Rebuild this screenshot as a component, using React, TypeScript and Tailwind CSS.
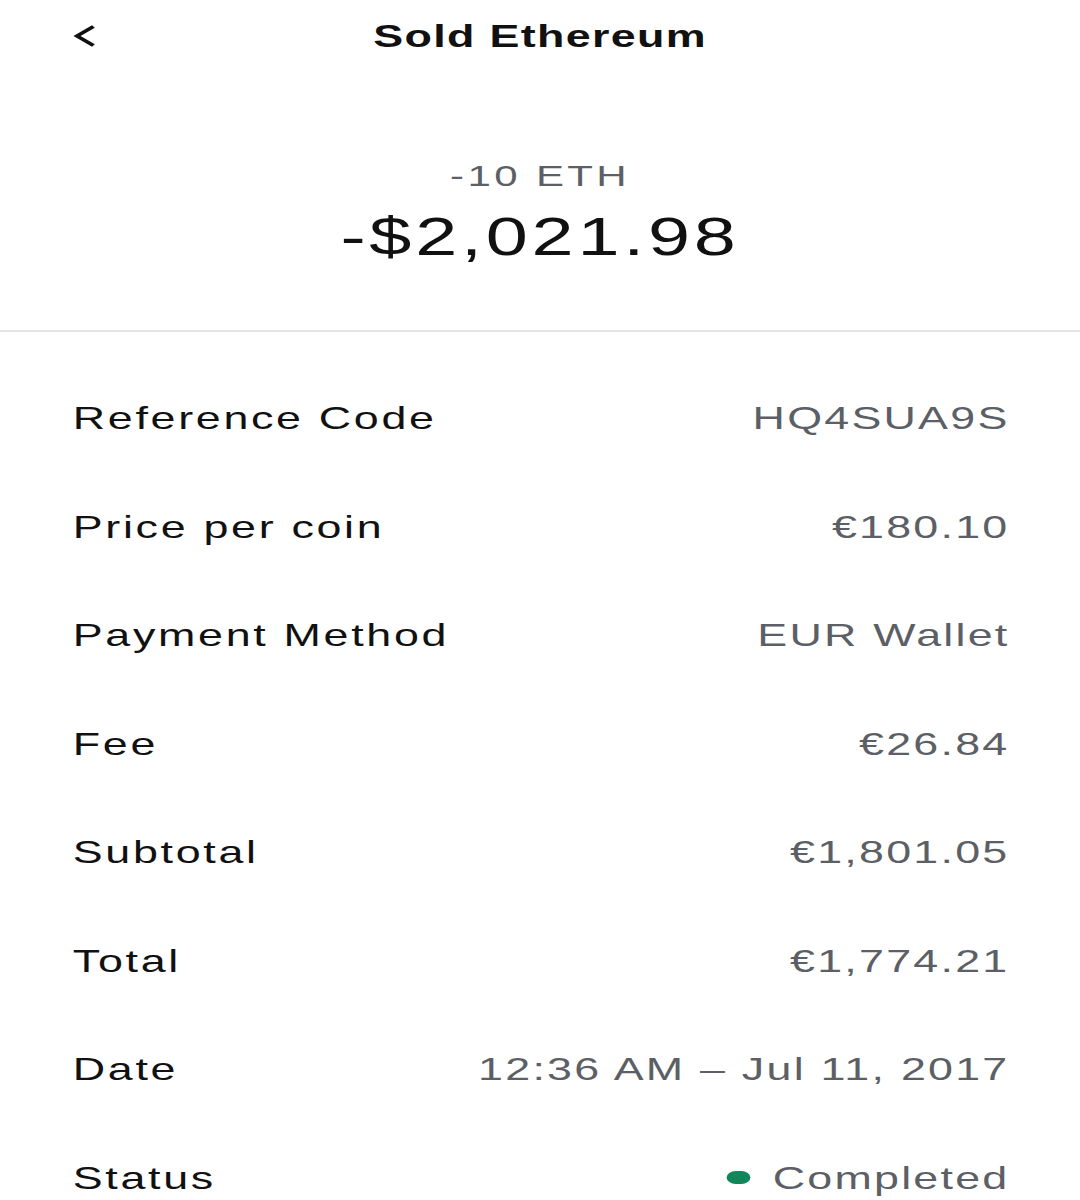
import React from 'react';

interface Row {
  label: string;
  value: string;
  status?: boolean;
}

const ROWS: Row[] = [
  { label: 'Reference Code', value: 'HQ4SUA9S' },
  { label: 'Price per coin', value: '€180.10' },
  { label: 'Payment Method', value: 'EUR Wallet' },
  { label: 'Fee', value: '€26.84' },
  { label: 'Subtotal', value: '€1,801.05' },
  { label: 'Total', value: '€1,774.21' },
  { label: 'Date', value: '12:36 AM – Jul 11, 2017' },
  { label: 'Status', value: 'Completed', status: true }
];

const App: React.FC = () => {
  return (
    <div className="w-[1080px] h-[1200px] overflow-hidden bg-white font-['Liberation_Sans',Arial,sans-serif]">
      {/* The screen is drawn wide: lay out at 771px, stretch horizontally */}
      <div className="w-[771.5px] origin-top-left scale-x-[1.4]">
        {/* Header */}
        <div className="h-[72px] px-[52px] flex items-center">
          <svg className="w-[16px] h-[22px] text-[#111]" viewBox="0 0 16 22" fill="none" stroke="currentColor" strokeWidth={3.2} strokeLinecap="square">
            <path d="M13.5 2.5L3 11l10.5 8.5" />
          </svg>
          <h1 className="flex-1 text-center text-[32px] leading-none font-bold tracking-[0.03em] text-[#111]">
            Sold Ethereum
          </h1>
          <div className="w-[16px]" />
        </div>

        {/* Amount */}
        <div className="flex flex-col items-center pt-[86px] pb-[64px]">
          <p className="text-[30px] leading-[36px] tracking-[0.08em] text-[#5c5f66]">-10 ETH</p>
          <p className="mt-[12px] text-[54px] leading-[60px] tracking-[0.05em] text-[#111]">-$2,021.98</p>
        </div>

        <div className="h-[2px] bg-[#e4e4e4]" />

        {/* Details */}
        <div className="pt-[32px] px-[52px]">
          {ROWS.map((row) =>
          <div key={row.label} className="h-[108.5px] flex items-center justify-between text-[32px] leading-none">
              <span className="tracking-[0.06em] text-[#111]">{row.label}</span>
              <span className="flex items-center tracking-[0.05em] -mr-[0.05em] text-[#5c5f66]">
                {row.status && <span className="w-[17px] h-[13px] rounded-full bg-[#11865a] mr-[16px]" />}
                {row.value}
              </span>
            </div>
          )}
        </div>
      </div>
    </div>);

};

export default App;
